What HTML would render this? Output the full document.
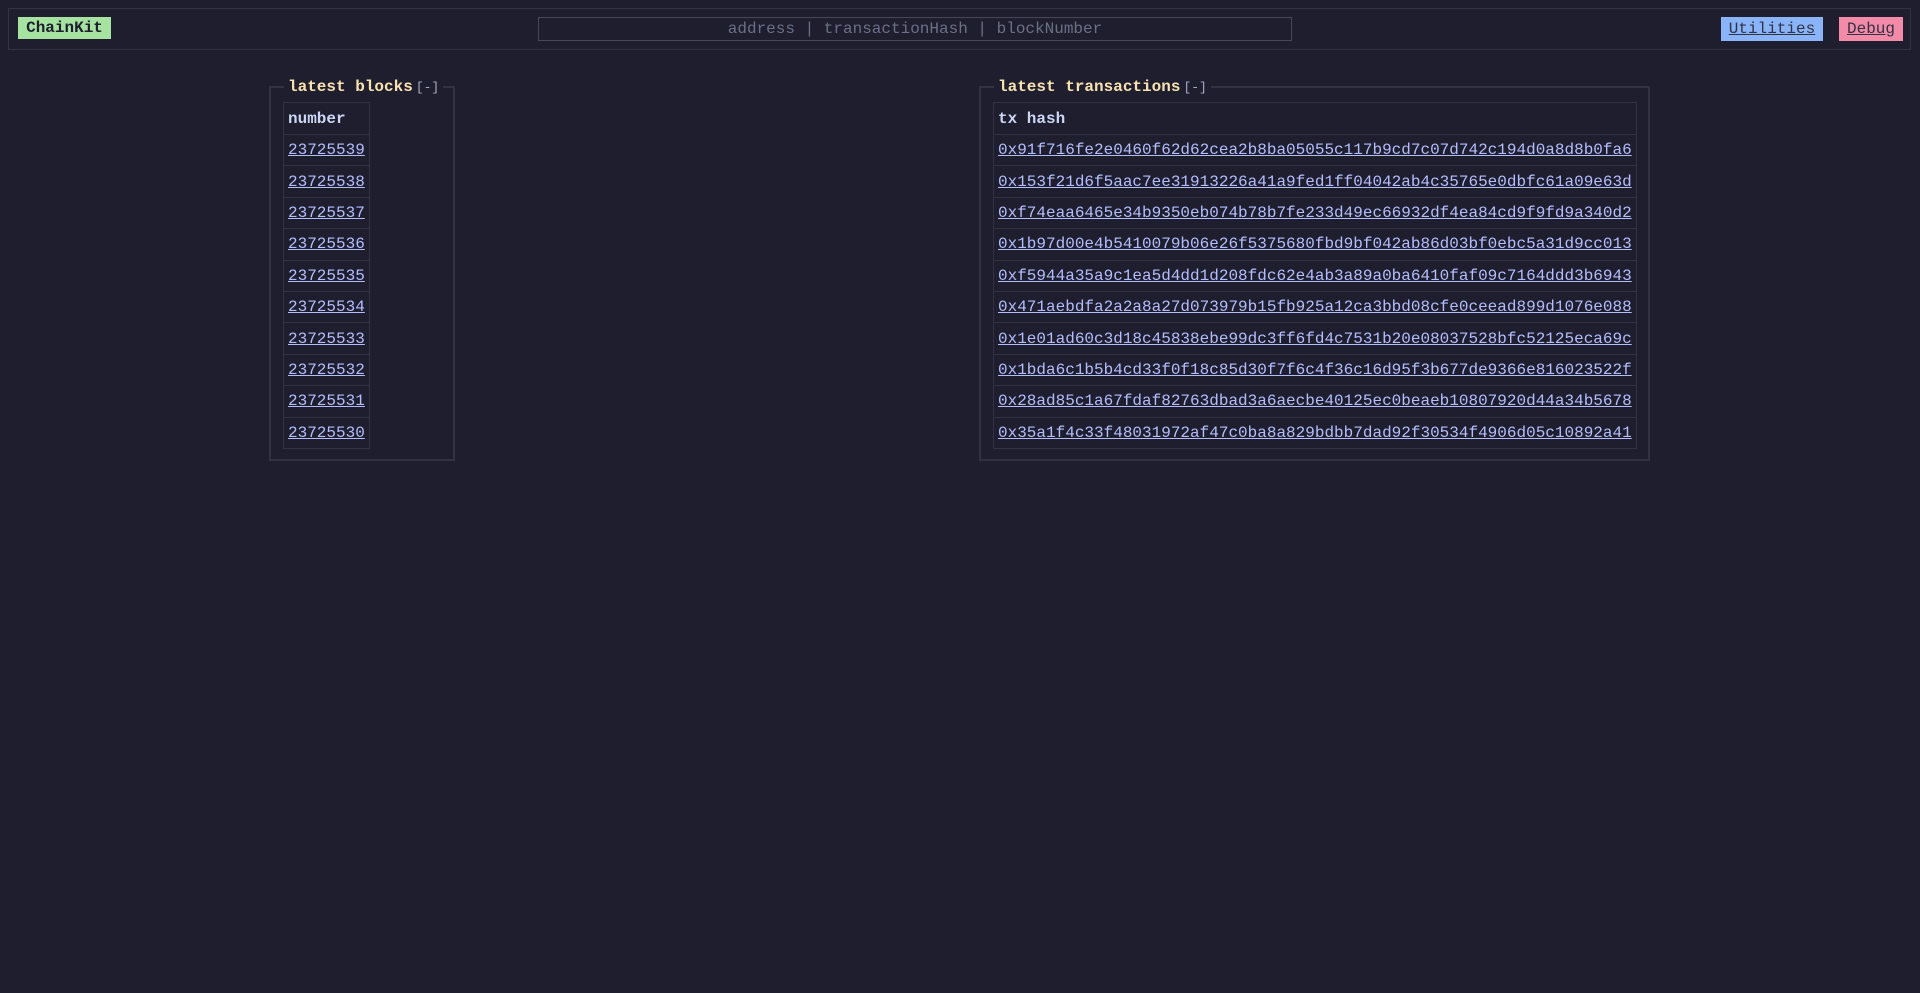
<!DOCTYPE html>
<html><head><meta charset="utf-8"><style>
*{box-sizing:border-box;margin:0;padding:0}
body{width:1920px;height:993px;background:#1e1e2e;font-family:"Liberation Mono",monospace;font-size:16px;color:#cdd6f4;position:relative;overflow:hidden}
.hdr{position:absolute;left:8px;top:8px;width:1903px;height:42px;border:1px solid #313244}
.brand{position:absolute;left:9px;top:8px;width:93px;height:22px;background:#a6e3a1;color:#1e1e2e;font-weight:bold;text-align:center;line-height:22px}
.search{position:absolute;left:529px;top:8px;width:754px;height:24px;border:1px solid #45475a;color:#6c7086;text-align:center;line-height:22px}
.btn{position:absolute;top:8px;height:24px;line-height:24px;color:#313244;text-decoration:underline;text-align:center}
.fs{position:absolute;border:2px solid #313244}
.lg{position:absolute;top:-10px;background:#1e1e2e;padding:0 4px;line-height:18px;white-space:nowrap}
.lg b{color:#f9e2af}
.lg span{color:#a6adc8;font-size:13px;margin-left:3px}
table{position:absolute;border-collapse:collapse}
td,th{border:1px solid #313244;padding:0 4px;height:31.4px;text-align:left;white-space:nowrap}
th{height:32px;font-weight:bold;color:#cdd6f4}
td{color:#b4befe;text-decoration:underline}
</style></head><body>
<div class="hdr">
<div class="brand">ChainKit</div>
<div class="search">address | transactionHash | blockNumber</div>
<div class="btn" style="left:1712px;width:102px;background:#89b4fa">Utilities</div>
<div class="btn" style="left:1830px;width:64px;background:#f38ba8">Debug</div>
</div>

<div class="fs" style="left:269px;top:86px;width:186px;height:375px">
<div class="lg" style="left:13px"><b>latest blocks</b><span>[-]</span></div>
<table style="left:12px;top:14px;width:87px">
<tr><th>number</th></tr>
<tr><td>23725539</td></tr><tr><td>23725538</td></tr><tr><td>23725537</td></tr><tr><td>23725536</td></tr><tr><td>23725535</td></tr><tr><td>23725534</td></tr><tr><td>23725533</td></tr><tr><td>23725532</td></tr><tr><td>23725531</td></tr><tr><td>23725530</td></tr>
</table>
</div>

<div class="fs" style="left:979px;top:86px;width:671px;height:375px">
<div class="lg" style="left:13px"><b>latest transactions</b><span>[-]</span></div>
<table style="left:12px;top:14px;width:644px">
<tr><th>tx hash</th></tr>
<tr><td>0x91f716fe2e0460f62d62cea2b8ba05055c117b9cd7c07d742c194d0a8d8b0fa6</td></tr>
<tr><td>0x153f21d6f5aac7ee31913226a41a9fed1ff04042ab4c35765e0dbfc61a09e63d</td></tr>
<tr><td>0xf74eaa6465e34b9350eb074b78b7fe233d49ec66932df4ea84cd9f9fd9a340d2</td></tr>
<tr><td>0x1b97d00e4b5410079b06e26f5375680fbd9bf042ab86d03bf0ebc5a31d9cc013</td></tr>
<tr><td>0xf5944a35a9c1ea5d4dd1d208fdc62e4ab3a89a0ba6410faf09c7164ddd3b6943</td></tr>
<tr><td>0x471aebdfa2a2a8a27d073979b15fb925a12ca3bbd08cfe0ceead899d1076e088</td></tr>
<tr><td>0x1e01ad60c3d18c45838ebe99dc3ff6fd4c7531b20e08037528bfc52125eca69c</td></tr>
<tr><td>0x1bda6c1b5b4cd33f0f18c85d30f7f6c4f36c16d95f3b677de9366e816023522f</td></tr>
<tr><td>0x28ad85c1a67fdaf82763dbad3a6aecbe40125ec0beaeb10807920d44a34b5678</td></tr>
<tr><td>0x35a1f4c33f48031972af47c0ba8a829bdbb7dad92f30534f4906d05c10892a41</td></tr>
</table>
</div>
</body></html>
